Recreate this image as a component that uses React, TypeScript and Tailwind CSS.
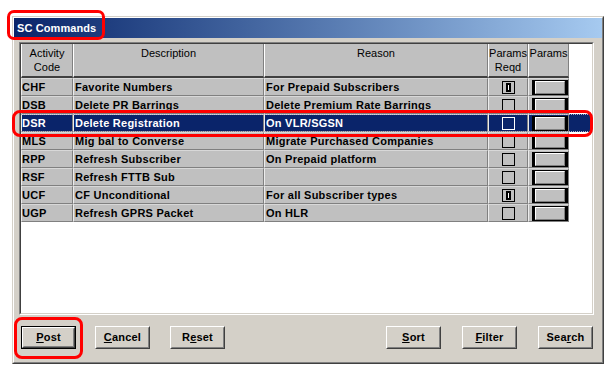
import React from "react"

type Row = { code: string; desc: string; reason: string; reqd?: boolean; selected?: boolean }

const rows: Row[] = [
    { code: "CHF", desc: "Favorite Numbers", reason: "For Prepaid Subscribers", reqd: true },
    { code: "DSB", desc: "Delete PR Barrings", reason: "Delete Premium Rate Barrings" },
    { code: "DSR", desc: "Delete Registration", reason: "On VLR/SGSN", selected: true },
    { code: "MLS", desc: "Mig bal to Converse", reason: "Migrate Purchased Companies" },
    { code: "RPP", desc: "Refresh Subscriber", reason: "On Prepaid platform" },
    { code: "RSF", desc: "Refresh FTTB Sub", reason: "" },
    { code: "UCF", desc: "CF Unconditional", reason: "For all Subscriber types", reqd: true },
    { code: "UGP", desc: "Refresh GPRS Packet", reason: "On HLR" },
]

function Btn({ pre, key1, post, isDefault }: { pre: string; key1: string; post: string; isDefault?: boolean }) {
    const inner = (
        <div className="h-full w-full border border-t-white border-l-white border-r-[#404040] border-b-[#404040]">
            <div className="h-full w-full border border-t-[#d4d0c8] border-l-[#d4d0c8] border-r-[#808080] border-b-[#808080] flex items-center justify-center text-[11px] font-bold tracking-[0.2px] text-black">
                <span>{pre}<span className="underline">{key1}</span>{post}</span>
            </div>
        </div>
    )
    if (isDefault) {
        return <div className="w-[55px] h-[23px] border border-black">{inner}</div>
    }
    return <div className="w-[55px] h-[23px]">{inner}</div>
}

function ParamsButton() {
    return (
        <div className="w-[36px] h-[15px] border-y border-black border-l-[3px] border-r-[3px] bg-[#c0c0c0]">
            <div className="h-full w-full border-t border-l border-t-white border-l-white border-r border-b border-r-[#808080] border-b-[#808080]" />
        </div>
    )
}

function CheckBox({ on, sel }: { on?: boolean; sel?: boolean }) {
    return (
        <div className={"w-[13px] h-[13px] border flex items-center justify-center " + (sel ? "border-white" : "border-black")}>
            {on && <div className="w-[5px] h-[9px] border-2 border-black bg-white" />}
        </div>
    )
}

export default function App() {
    const cell = "h-full border-l border-r border-t border-b border-l-[#ececec] border-t-[#d8d8d8] border-r-[#808080] border-b-[#808080]"
    const head = "h-full border-l border-l-white border-r border-r-[#808080] border-b-2 border-b-[#404040] bg-[#c0c0c0] text-center pt-[2px] leading-[14px]"

    return (
        <div className="relative w-[612px] h-[384px] bg-white overflow-hidden font-['Liberation_Sans',Arial,sans-serif] text-black">
            <div className="ml-[12px] mt-[16px] w-[592px] h-[348px] border border-t-[#d4d0c8] border-l-[#d4d0c8] border-r-[#404040] border-b-[#404040]">
                <div className="w-full h-full border border-t-white border-l-white border-r-[#808080] border-b-[#808080] bg-[#d4d0c8] flex flex-col">
                    {/* title bar */}
                    <div className="h-[20px] bg-gradient-to-r from-[#0a246a] to-[#a6caf0] flex items-center pl-[3px]">
                        <span className="text-white text-[11px] font-bold tracking-[0.1px]">SC Commands</span>
                    </div>

                    {/* list */}
                    <div className="ml-[5px] mt-[4px] w-[575px] h-[273px] border border-t-[#808080] border-l-[#808080] border-r-white border-b-white">
                        <div className="w-full h-full border border-t-[#404040] border-l-[#404040] border-r-[#d4d0c8] border-b-[#d4d0c8] bg-white">
                            <div className="flex h-[34px] text-[11px]">
                                <div className={head + " w-[52px]"}>Activity<br />Code</div>
                                <div className={head + " w-[191px]"}>Description</div>
                                <div className={head + " w-[224px]"}>Reason</div>
                                <div className={head + " w-[40px]"}>Params<br />Reqd</div>
                                <div className={head + " w-[41px] border-r-[#404040]"}>Params</div>
                                <div className="flex-1" />
                            </div>
                            {rows.map((r, i) => (
                                <div key={i} className={"relative flex h-[18px] text-[11px] font-bold tracking-[0.25px] leading-[16px] " + (r.selected ? "bg-[#0a246a] text-white" : "text-black")}>
                                    <div className={cell + " w-[52px] " + (r.selected ? "" : "bg-[#c0c0c0]")}>{r.code}</div>
                                    <div className={cell + " w-[191px] pl-[1px] " + (r.selected ? "" : "bg-[#c0c0c0]")}>{r.desc}</div>
                                    <div className={cell + " w-[224px] pl-[1px] whitespace-nowrap " + (r.selected ? "" : "bg-[#c0c0c0]")}>{r.reason}</div>
                                    <div className={cell + " w-[40px] flex items-center justify-center " + (r.selected ? "" : "bg-[#c0c0c0]")}>
                                        <CheckBox on={r.reqd} sel={r.selected} />
                                    </div>
                                    <div className={cell + " w-[41px] flex items-center justify-end pr-[0px] " + (r.selected ? "" : "bg-[#c0c0c0]")}>
                                        <ParamsButton />
                                    </div>
                                    <div className="flex-1" />
                                    {r.selected && (
                                        <div className="absolute inset-0 border-y border-dotted border-[#b0b0c8]" />
                                    )}
                                </div>
                            ))}
                        </div>
                    </div>

                    {/* buttons */}
                    <div className="mt-[11px] flex ml-[7px] mr-[9px]">
                        <div className="flex gap-[19px]">
                            <Btn pre="" key1="P" post="ost" isDefault />
                            <div className="flex gap-[20px]">
                                <Btn pre="" key1="C" post="ancel" />
                                <Btn pre="R" key1="e" post="set" />
                            </div>
                        </div>
                        <div className="flex-1" />
                        <div className="flex gap-[21px]">
                            <Btn pre="" key1="S" post="ort" />
                            <Btn pre="" key1="F" post="ilter" />
                            <Btn pre="Sea" key1="r" post="ch" />
                        </div>
                    </div>
                </div>
            </div>

            {/* red annotations */}
            <div className="absolute left-[7px] top-[10px] w-[98px] h-[30px] border-[3px] border-[#ff0000] rounded-[7px]" />
            <div className="absolute left-[12px] top-[110px] w-[581px] h-[27px] border-[3px] border-[#ff0000] rounded-[8px]" />
            <div className="absolute left-[14px] top-[317px] w-[69px] h-[42px] border-[3px] border-[#ff0000] rounded-[8px]" />
        </div>
    )
}
